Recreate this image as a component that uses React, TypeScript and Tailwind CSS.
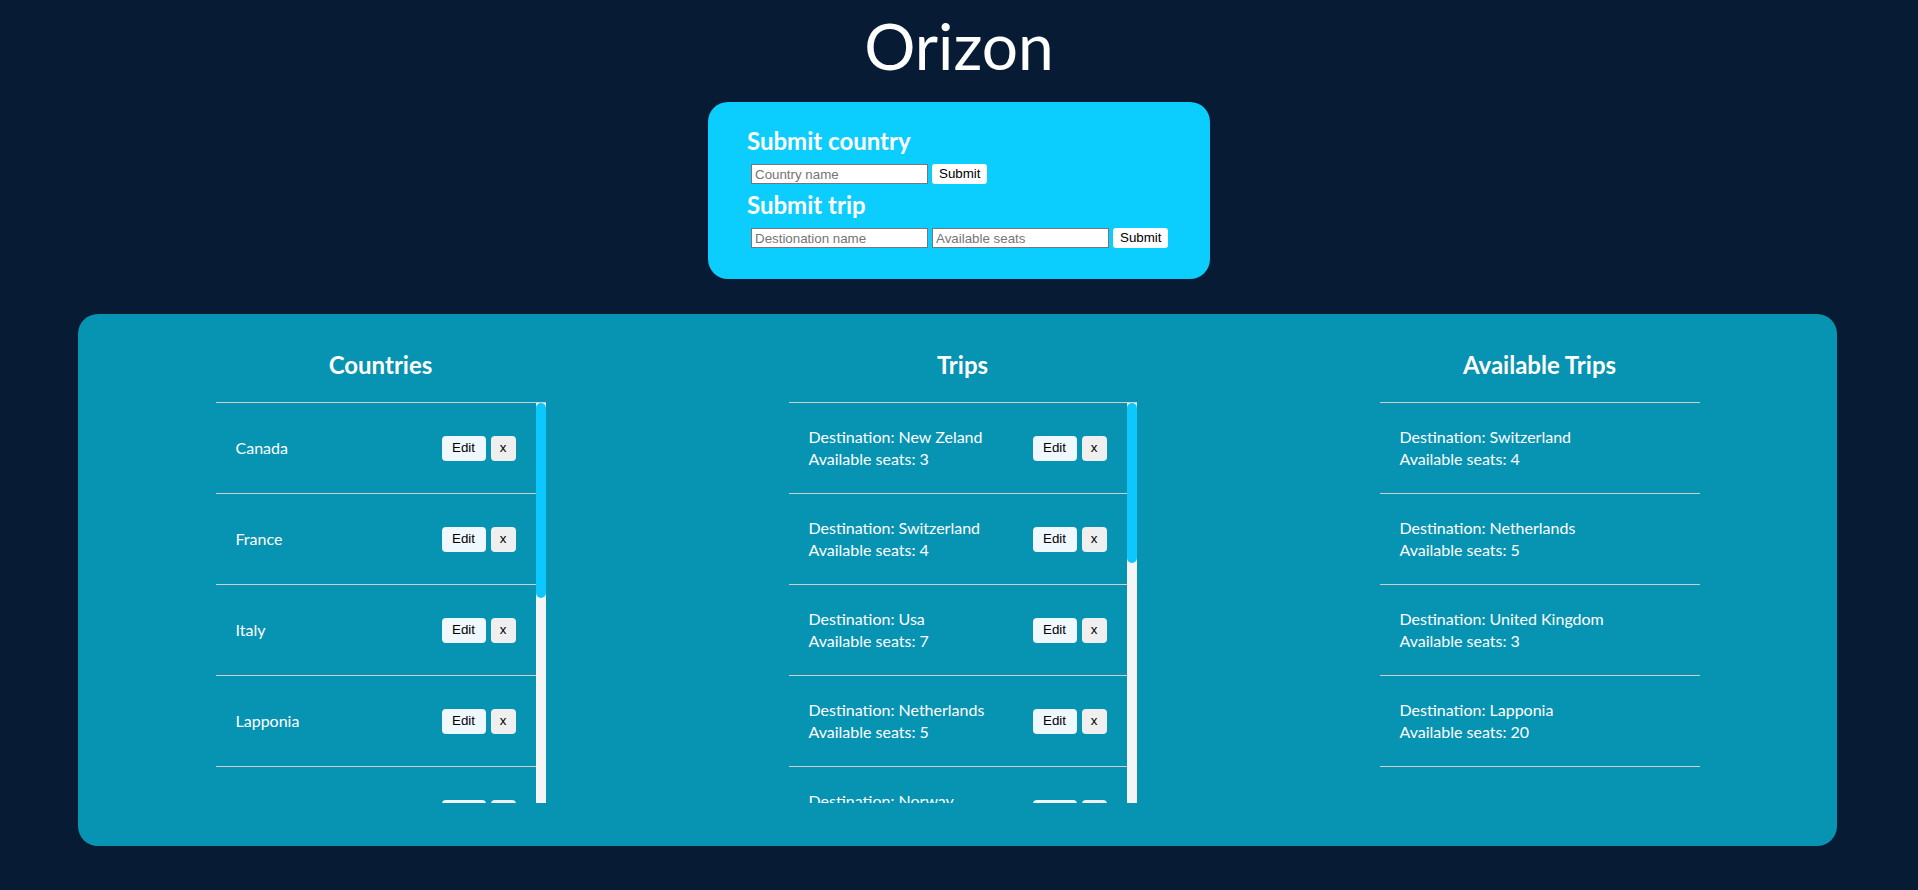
import React from 'react'

const countries = ['Canada', 'France', 'Italy', 'Lapponia', 'Netherlands', 'New Zeland', 'Norway', 'Switzerland', 'Usa']

const trips = [
  { destination: 'New Zeland', seats: 3 },
  { destination: 'Switzerland', seats: 4 },
  { destination: 'Usa', seats: 7 },
  { destination: 'Netherlands', seats: 5 },
  { destination: 'Norway', seats: 0 },
  { destination: 'Canada', seats: 0 },
  { destination: 'United Kingdom', seats: 3 },
  { destination: 'France', seats: 0 },
  { destination: 'Italy', seats: 0 },
  { destination: 'Lapponia', seats: 20 },
  { destination: 'Usa', seats: 0 },
]

const available = trips.filter((t) => t.seats > 0 && t.destination !== 'New Zeland' && t.destination !== 'Usa')

const font = { fontFamily: 'Lato, "Noto Sans", sans-serif' }

const rowCls = 'h-[91px] shrink-0 border-b border-[#cfcfcf] px-5 flex items-center text-[16px]'

function RowButtons() {
  return (
    <div className="flex gap-[5px] shrink-0 font-['Liberation_Sans',Arial,sans-serif] text-[13.33px] text-black">
      <button className="w-[44px] h-[25px] rounded-[4px] bg-[#f0f8ff]">Edit</button>
      <button className="w-[25px] h-[25px] rounded-[4px] bg-[#efefef]">x</button>
    </div>
  )
}

function TripText({ destination, seats }: { destination: string; seats: number }) {
  return (
    <div className="leading-[22px]">
      <div>Destination: {destination}</div>
      <div>Available seats: {seats}</div>
    </div>
  )
}

// list with the page's cyan scrollbar (thumb size mirrors how much is visible)
function ScrollList({ thumb, children }: { thumb: number; children: React.ReactNode }) {
  return (
    <div className="border-t border-[#cfcfcf] h-[401px] flex">
      <div className="flex-1 flex flex-col overflow-hidden">{children}</div>
      <div className="w-[10px] bg-[#f5f5f5] shrink-0">
        <div className="w-[10px] rounded-[5px] bg-[#0cc8ff]" style={{ height: thumb }} />
      </div>
    </div>
  )
}

const inputCls =
  "w-[177px] h-[20px] border border-[#767676] bg-white px-[3px] text-[13.33px] text-black placeholder:text-[#757575] font-['Liberation_Sans',Arial,sans-serif] outline-none"
const submitCls =
  "h-[20px] px-[7px] rounded-[3px] bg-white text-[13.33px] text-black font-['Liberation_Sans',Arial,sans-serif]"

export default function App() {
  return (
    <div className="min-h-screen bg-[#071b34] text-white" style={font}>
      <h1 className="pt-[14px] text-center text-[64px] leading-[64px] font-normal">Orizon</h1>

      {/* forms */}
      <div className="mx-auto mt-[24px] w-[502px] h-[177px] rounded-[20px] bg-[#0bcdfe] pt-[25px] pl-[39px]">
        <h2 className="text-[24px] leading-[28px] font-bold">Submit country</h2>
        <div className="mt-[9px] ml-1 flex gap-1">
          <input className={inputCls} placeholder="Country name" />
          <button className={submitCls}>Submit</button>
        </div>
        <h2 className="mt-[7px] text-[24px] leading-[28px] font-bold">Submit trip</h2>
        <div className="mt-[9px] ml-1 flex gap-1">
          <input className={inputCls} placeholder="Destionation name" />
          <input className={inputCls} placeholder="Available seats" />
          <button className={submitCls}>Submit</button>
        </div>
      </div>

      {/* lists */}
      <div className="ml-[78px] mt-[35px] w-[1759px] h-[532px] rounded-[20px] bg-[#0793b2] px-4 pt-[37px] flex justify-around">
        <div className="w-[330px]">
          <h2 className="text-center text-[24px] leading-[28px] font-bold mb-[23px]">Countries</h2>
          <ScrollList thumb={195}>
            {countries.map((c) => (
              <div key={c} className={rowCls + ' justify-between gap-5'}>
                <span>{c}</span>
                <RowButtons />
              </div>
            ))}
          </ScrollList>
        </div>

        <div className="w-[348px]">
          <h2 className="text-center text-[24px] leading-[28px] font-bold mb-[23px]">Trips</h2>
          <ScrollList thumb={160}>
            {trips.map((t, i) => (
              <div key={i} className={rowCls + ' justify-between gap-5'}>
                <TripText destination={t.destination} seats={t.seats} />
                <RowButtons />
              </div>
            ))}
          </ScrollList>
        </div>

        <div className="w-[320px]">
          <h2 className="text-center text-[24px] leading-[28px] font-bold mb-[23px]">Available Trips</h2>
          <div className="border-t border-[#cfcfcf]">
            {available.map((t, i) => (
              <div key={i} className={rowCls}>
                <TripText destination={t.destination} seats={t.seats} />
              </div>
            ))}
          </div>
        </div>
      </div>
    </div>
  )
}
